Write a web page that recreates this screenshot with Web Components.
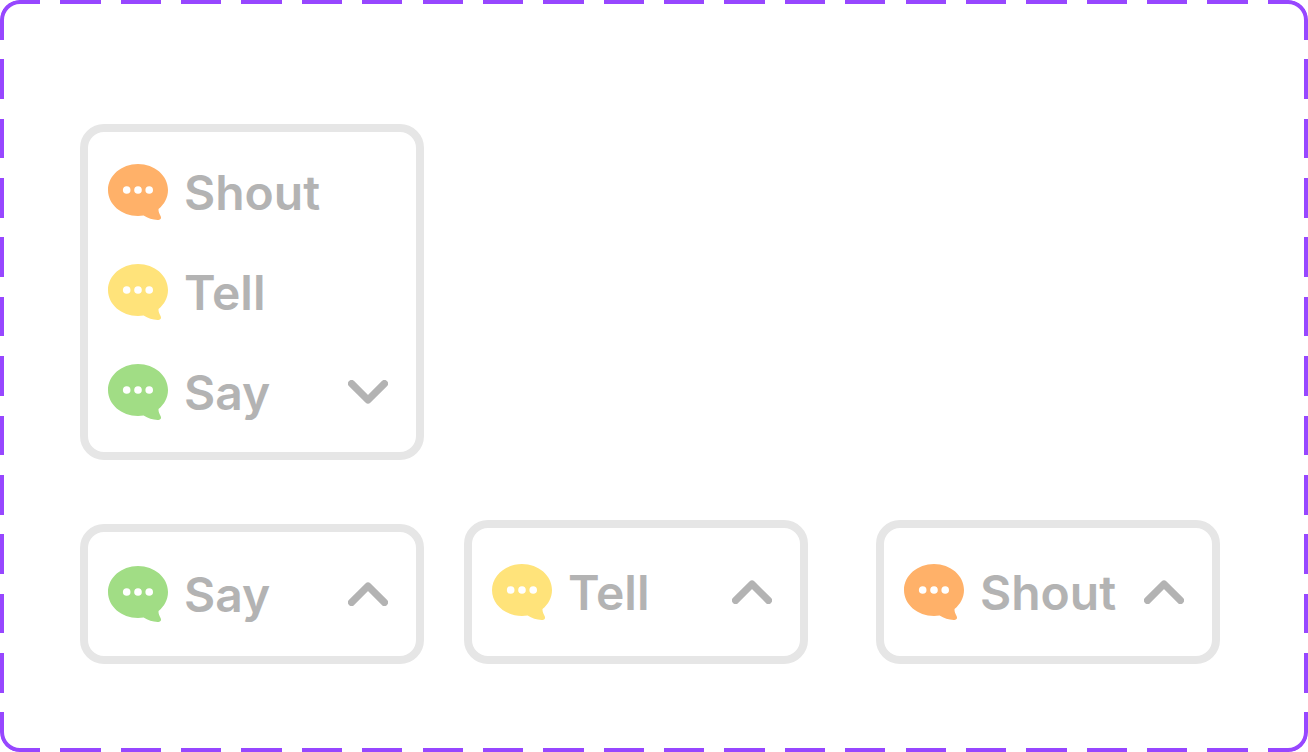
<!DOCTYPE html>
<html lang="en">
<head>
<meta charset="utf-8">
<meta name="viewport" content="width=device-width, initial-scale=1">
<title>Chat mode picker</title>
<style>
  body { margin: 0; background: #fff; font-family: Inter, "Liberation Sans", sans-serif; }
</style>
</head>
<body>
<variant-frame>
  <mode-list>
    <mode-option mode="shout">Shout</mode-option>
    <mode-option mode="tell">Tell</mode-option>
    <mode-option mode="say" chevron="down">Say</mode-option>
  </mode-list>
  <mode-row>
    <mode-card><mode-option mode="say" chevron="up">Say</mode-option></mode-card>
    <mode-card tall><mode-option mode="tell" chevron="up">Tell</mode-option></mode-card>
    <mode-card tall last><mode-option mode="shout" chevron="up">Shout</mode-option></mode-card>
  </mode-row>
</variant-frame>

<script>
  function define(name, html, setup) {
    const template = document.createElement('template');
    template.innerHTML = html;
    customElements.define(name, class extends HTMLElement {
      constructor() {
        super();
        this.attachShadow({ mode: 'open' }).append(template.content.cloneNode(true));
      }
      connectedCallback() {
        if (setup) setup(this, this.shadowRoot);
      }
    });
  }

  // Dashed, rounded outline: a solid border seen through a dash pattern on each side.
  define('variant-frame', `
    <style>
      :host {
        display: flex; flex-direction: column; gap: 60px; position: relative;
        box-sizing: border-box; min-height: 100vh; padding: 124px 88px 88px 80px;
      }
      .outline {
        --dash: #000 0 calc(200% / 65), transparent 0 calc(300% / 65);
        --vdash: #000 0 calc(200% / 38), transparent 0 calc(300% / 38);
        position: absolute; inset: 0; pointer-events: none;
        border: 4px solid #9747ff; border-radius: 20px;
        mask:
          repeating-linear-gradient(90deg, var(--dash)) top / 100% 20px no-repeat border-box,
          repeating-linear-gradient(90deg, var(--dash)) bottom / 100% 20px no-repeat border-box,
          repeating-linear-gradient(180deg, var(--vdash)) left / 20px 100% no-repeat border-box,
          repeating-linear-gradient(180deg, var(--vdash)) right / 20px 100% no-repeat border-box;
      }
    </style>
    <slot></slot>
    <div class="outline"></div>`);

  define('mode-list', `
    <style>
      :host {
        display: flex; flex-direction: column; gap: 40px;
        box-sizing: border-box; width: 100%; max-width: 344px; padding: 30px 20px;
        border: 8px solid #e6e6e6; border-radius: 24px; background: #fff;
      }
    </style>
    <slot></slot>`);

  define('mode-row', `
    <style>
      :host { display: flex; flex-wrap: wrap; align-items: flex-end; gap: 40px; }
    </style>
    <slot></slot>`);

  define('mode-card', `
    <style>
      :host {
        display: block; flex: 0 1 344px; box-sizing: border-box; padding: 32px 20px;
        border: 8px solid #e6e6e6; border-radius: 24px; background: #fff;
      }
      :host([tall]) { padding: 34px 20px; }
      :host([last]) { margin-left: auto; }
    </style>
    <slot></slot>`);

  define('mode-option', `
    <style>
      :host { display: block; --bubble: #a1dd85; }
      :host([mode="tell"]) { --bubble: #ffe37a; }
      :host([mode="shout"]) { --bubble: #ffb169; }
      button {
        display: flex; align-items: center; gap: 16px; width: 100%; height: 60px;
        margin: 0; padding: 0 8px 0 0; border: 0; background: none; cursor: pointer;
        color: #b3b3b3; font: 600 48px/58px Inter, "Liberation Sans", sans-serif; text-align: left;
      }
      svg { display: block; flex: none; }
      .label { flex: 1; padding-top: 2px; }
      .chevron { display: none; }
      :host([chevron]) .chevron { display: block; }
      :host([chevron="down"]) .chevron { transform: rotate(180deg); }
    </style>
    <button type="button">
      <svg width="60" height="60" viewBox="0 0 60 60" aria-hidden="true">
        <path fill="var(--bubble)" d="M30 2C46.600 2 60 13.600 60 28C60 35.600 56.400 42.300 50.500 47C50.300 49.800 51.500 52 52.700 54.300C53.600 56.300 52.800 57.800 50.500 58C45.200 58.200 40 56.400 35.600 53.600C33.800 53.900 31.900 54 30 54C13.400 54 0 42.400 0 28C0 13.600 13.400 2 30 2Z"/>
        <g fill="#fff"><circle cx="18.700" cy="28" r="3.800"/><circle cx="30" cy="28" r="3.800"/><circle cx="41.200" cy="28" r="3.800"/></g>
      </svg>
      <span class="label"><slot></slot></span>
      <svg class="chevron" width="40" height="24" viewBox="0 0 40 24" aria-hidden="true">
        <path d="M3.600 20.400L20 4L36.400 20.400" fill="none" stroke="#b3b3b3" stroke-width="7.200" stroke-linecap="round" stroke-linejoin="round"/>
      </svg>
    </button>`, (host, root) => {
      const state = host.getAttribute('chevron');
      if (state) root.querySelector('button').setAttribute('aria-expanded', String(state === 'down'));
    });
</script>
</body>
</html>
